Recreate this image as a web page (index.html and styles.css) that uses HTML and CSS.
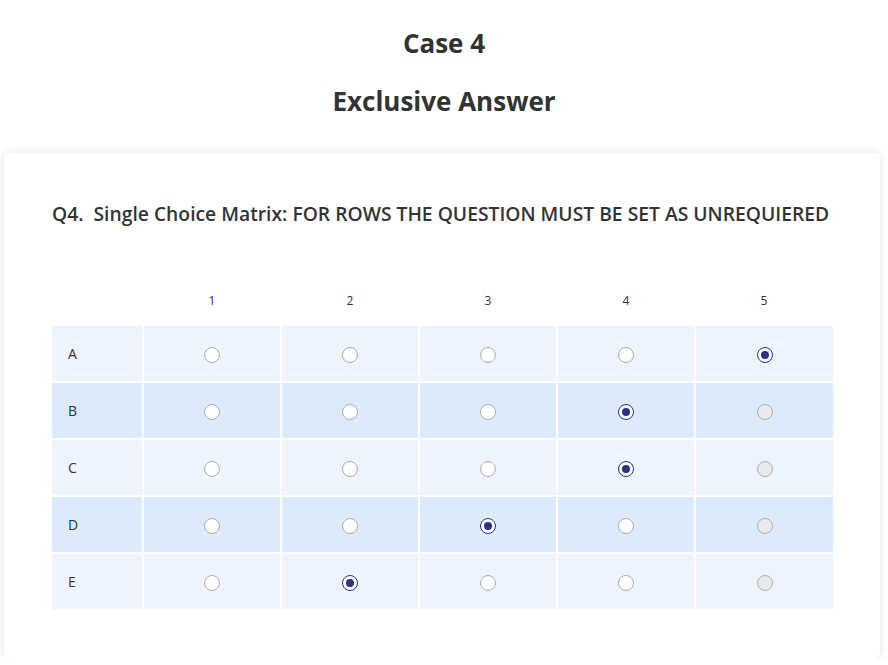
FILE: index.html
```html
<!DOCTYPE html>
<html lang="en">
<head>
    <meta charset="UTF-8">
    <meta name="viewport" content="width=device-width, initial-scale=1.0">
    <title>Case 4</title>
    <link rel="stylesheet" href="styles.css">
</head>
<body>
    <h1 class="page-title">Case 4</h1>
    <h2 class="page-subtitle">Exclusive Answer</h2>

    <div class="card">
        <h3 class="question">Q4.&nbsp; Single Choice Matrix: FOR ROWS THE QUESTION MUST BE SET AS UNREQUIERED</h3>

        <table class="matrix">
            <thead>
                <tr>
                    <th class="label-col"></th>
                    <th>1</th>
                    <th>2</th>
                    <th>3</th>
                    <th>4</th>
                    <th>5</th>
                </tr>
            </thead>
            <tbody>
                <tr class="odd">
                    <td class="row-label">A</td>
                    <td><span class="radio"></span></td>
                    <td><span class="radio"></span></td>
                    <td><span class="radio"></span></td>
                    <td><span class="radio"></span></td>
                    <td><span class="radio checked"></span></td>
                </tr>
                <tr class="even">
                    <td class="row-label">B</td>
                    <td><span class="radio"></span></td>
                    <td><span class="radio"></span></td>
                    <td><span class="radio"></span></td>
                    <td><span class="radio checked"></span></td>
                    <td><span class="radio disabled"></span></td>
                </tr>
                <tr class="odd">
                    <td class="row-label">C</td>
                    <td><span class="radio"></span></td>
                    <td><span class="radio"></span></td>
                    <td><span class="radio"></span></td>
                    <td><span class="radio checked"></span></td>
                    <td><span class="radio disabled"></span></td>
                </tr>
                <tr class="even">
                    <td class="row-label">D</td>
                    <td><span class="radio"></span></td>
                    <td><span class="radio"></span></td>
                    <td><span class="radio checked"></span></td>
                    <td><span class="radio"></span></td>
                    <td><span class="radio disabled"></span></td>
                </tr>
                <tr class="odd">
                    <td class="row-label">E</td>
                    <td><span class="radio"></span></td>
                    <td><span class="radio checked"></span></td>
                    <td><span class="radio"></span></td>
                    <td><span class="radio"></span></td>
                    <td><span class="radio disabled"></span></td>
                </tr>
            </tbody>
        </table>
    </div>
</body>
</html>
```

FILE: styles.css
```css
body {
    font-family: "Open Sans", "Noto Sans", sans-serif;
    margin: 0;
    padding: 0;
    background-color: #fff;
    color: #333;
}

.page-title,
.page-subtitle {
    text-align: center;
    font-size: 26px;
    font-weight: bold;
    margin: 0;
    color: #333;
}

.page-title {
    padding-top: 26px;
    line-height: 34px;
}

.page-subtitle {
    margin-top: 24px;
    line-height: 34px;
}

.card {
    margin: 35px 8px 0 4px;
    width: 876px;
    box-sizing: border-box;
    background-color: #fff;
    border-radius: 5px;
    box-shadow: 0 0 8px rgba(0, 0, 0, 0.12);
    padding: 48px 47px 49px 48px;
}

.question {
    margin: 0;
    font-size: 19.3px;
    font-weight: 600;
    line-height: 26px;
    color: #333;
    white-space: nowrap;
}

.matrix {
    width: 781px;
    margin-top: 65px;
    border-collapse: collapse;
    table-layout: fixed;
    font-size: 13px;
}

.matrix th {
    font-weight: normal;
    font-size: 12px;
    line-height: 17px;
    padding: 0 0 17px;
    vertical-align: top;
    color: #333;
    width: 138px;
}

.matrix .label-col {
    width: 91px;
}

.matrix td {
    height: 55px;
    padding: 0;
    text-align: center;
    vertical-align: middle;
    border: 2px solid #fff;
}

.matrix tr:first-child td {
    border-top: none;
}

.matrix tr:last-child td {
    border-bottom: none;
}

.matrix td:first-child {
    border-left: none;
}

.matrix td:last-child {
    border-right: none;
}

.matrix .row-label {
    text-align: left;
    padding-left: 16px;
    font-size: 14px;
    color: #333;
}

.odd td {
    background-color: #eef4fe;
}

.even td {
    background-color: #dcebfb;
}

.radio {
    display: inline-block;
    width: 14px;
    height: 14px;
    border: 1px solid #b1aca8;
    border-radius: 50%;
    background-color: #fff;
    vertical-align: middle;
    position: relative;
}

.radio.disabled {
    background-color: #e8eaed;
}

.radio.checked {
    border-color: #2c3183;
}

.radio.checked::after {
    content: "";
    position: absolute;
    left: 3px;
    top: 3px;
    width: 8px;
    height: 8px;
    border-radius: 50%;
    background-color: #2c3183;
}
```
